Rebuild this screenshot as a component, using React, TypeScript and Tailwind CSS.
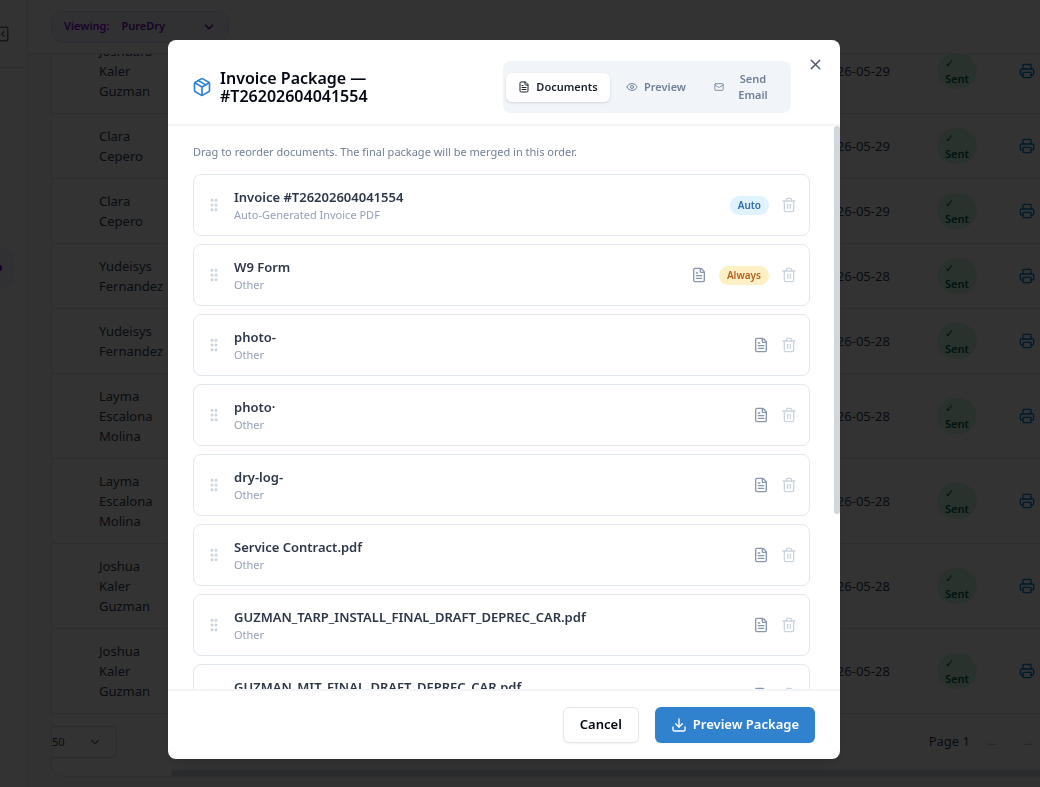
import React, { useState } from 'react';
import {
  ChevronDown,
  Download,
  Eye,
  FileText,
  GripVertical,
  Mail,
  Package,
  PanelLeftClose,
  Printer,
  Trash2,
  X,
} from 'lucide-react';

type Doc = {
  id: number;
  name: string;
  type: string;
  badge?: 'Auto' | 'Always';
  hasFile: boolean;
};

const DOCS: Doc[] = [
  { id: 1, name: 'Invoice #T26202604041554', type: 'Auto-Generated Invoice PDF', badge: 'Auto', hasFile: false },
  { id: 2, name: 'W9 Form', type: 'Other', badge: 'Always', hasFile: true },
  { id: 3, name: 'photo-', type: 'Other', hasFile: true },
  { id: 4, name: 'photo·', type: 'Other', hasFile: true },
  { id: 5, name: 'dry-log-', type: 'Other', hasFile: true },
  { id: 6, name: 'Service Contract.pdf', type: 'Other', hasFile: true },
  { id: 7, name: 'GUZMAN_TARP_INSTALL_FINAL_DRAFT_DEPREC_CAR.pdf', type: 'Other', hasFile: true },
  { id: 8, name: 'GUZMAN_MIT_FINAL_DRAFT_DEPREC_CAR.pdf', type: 'Other', hasFile: true },
];

const INVOICES = [
  { name: ['Joshuara', 'Kaler', 'Guzman'], date: '2026-05-29' },
  { name: ['Clara', 'Cepero'], date: '2026-05-29' },
  { name: ['Clara', 'Cepero'], date: '2026-05-29' },
  { name: ['Yudeisys', 'Fernandez'], date: '2026-05-28' },
  { name: ['Yudeisys', 'Fernandez'], date: '2026-05-28' },
  { name: ['Layma', 'Escalona', 'Molina'], date: '2026-05-28' },
  { name: ['Layma', 'Escalona', 'Molina'], date: '2026-05-28' },
  { name: ['Joshua', 'Kaler', 'Guzman'], date: '2026-05-28' },
  { name: ['Joshua', 'Kaler', 'Guzman'], date: '2026-05-28' },
];

const Sidebar: React.FC = () => (
  <aside className="flex w-7 shrink-0 flex-col overflow-hidden border-r border-gray-200 bg-white">
    <div className="flex h-[68px] shrink-0 items-center border-b border-gray-200">
      <button aria-label="Collapse sidebar" className="-ml-2 text-gray-500">
        <PanelLeftClose size={18} />
      </button>
    </div>
    <div className="mt-[180px] flex h-10 w-3.5 items-center rounded-r-xl bg-violet-50">
      <span className="h-1.5 w-0.5 rounded-r-full bg-violet-700" />
    </div>
  </aside>
);

const InvoiceTable: React.FC = () => (
  <table className="-mt-[25px] w-full table-fixed text-[13px] leading-5 text-slate-700">
    <colgroup>
      <col className="w-[31px]" />
      <col className="w-24" />
      <col />
      <col className="w-[115px]" />
      <col className="w-[82px]" />
      <col className="w-[37px]" />
    </colgroup>
    <tbody>
      {INVOICES.map((row, i) => (
        <tr key={i} className="border-b border-gray-200">
          <td />
          <td className="py-3 pl-4">
            {row.name.map((part) => (
              <span key={part} className="block">{part}</span>
            ))}
          </td>
          <td />
          <td className="pl-4">{row.date}</td>
          <td className="pl-4">
            <span className="flex h-9 w-10 flex-col justify-center rounded-full bg-emerald-100 px-2 text-[11px] leading-4 font-semibold text-emerald-800">
              <span className="font-normal">✓</span>
              <span>Sent</span>
            </span>
          </td>
          <td className="pl-4">
            <button aria-label="Print invoice" className="block text-sky-600">
              <Printer size={16} />
            </button>
          </td>
        </tr>
      ))}
    </tbody>
  </table>
);

const DocRow: React.FC<{ doc: Doc; onRemove: (id: number) => void }> = ({ doc, onRemove }) => (
  <li className="flex items-center gap-3 rounded-lg border border-[#e2e8f0] bg-white p-3">
    <GripVertical size={16} strokeWidth={2.5} className="shrink-0 cursor-grab text-[#cbd5e0]" />
    <div className="min-w-0 flex-1">
      <p className="truncate text-[13px] leading-5 font-semibold text-[#2d3748]">{doc.name}</p>
      <p className="text-[11px] leading-4 text-[#94a1b5]">{doc.type}</p>
    </div>
    {doc.hasFile && (
      <button aria-label={`Open ${doc.name}`} className="text-[#8896b0]">
        <FileText size={16} />
      </button>
    )}
    {doc.badge === 'Auto' && (
      <span className="rounded-full bg-[#e0f2fe] px-2 text-[10px] leading-[19px] font-semibold text-[#2b6cb0]">Auto</span>
    )}
    {doc.badge === 'Always' && (
      <span className="rounded-full bg-[#fdf0c4] px-2 text-[10px] leading-[19px] font-semibold text-[#b7601f]">Always</span>
    )}
    <button aria-label={`Remove ${doc.name}`} onClick={() => onRemove(doc.id)} className="text-[#cbd5e0]">
      <Trash2 size={16} />
    </button>
  </li>
);

const App: React.FC = () => {
  const [docs, setDocs] = useState<Doc[]>(DOCS);

  const removeDoc = (id: number) => {
    setDocs(docs.filter((d) => d.id !== id));
  };

  return (
    <div className="flex h-screen overflow-hidden bg-white font-['Noto_Sans','Open_Sans',sans-serif]">
      <Sidebar />

      <div className="flex min-w-0 flex-1 flex-col bg-gray-50">
        <header className="flex h-[54px] shrink-0 items-center border-b border-gray-200 bg-white pl-[23px]">
          <div className="relative flex h-8 w-[178px] items-center gap-3 rounded-xl border border-violet-200 bg-violet-50 pl-3 text-[11px] font-semibold text-purple-700">
            <label htmlFor="company">Viewing:</label>
            <select id="company" className="h-full flex-1 appearance-none bg-transparent text-purple-800">
              <option>PureDry</option>
            </select>
            <ChevronDown size={14} strokeWidth={3} className="pointer-events-none absolute right-3 text-purple-800" />
          </div>
        </header>

        <main className="min-h-0 flex-1 pl-[23px]">
          <section className="overflow-hidden rounded-bl-xl border-b border-l border-gray-200 bg-white">
            <InvoiceTable />
            <div className="flex items-center justify-between py-3 text-slate-700">
              <div className="relative flex h-8 w-[65px] items-center rounded-r-md border border-l-0 border-gray-300">
                <select aria-label="Rows per page" className="h-full w-full appearance-none bg-transparent text-[11px]">
                  <option>50</option>
                </select>
                <ChevronDown size={14} className="pointer-events-none absolute right-3.5 text-gray-500" />
              </div>
              <div className="flex items-center gap-4 pr-1.5 text-[13px]">
                <span>Page 1</span>
                <div className="flex gap-6 text-xs text-gray-400">
                  <button aria-label="Previous page" disabled>←</button>
                  <button aria-label="Next page" disabled>→</button>
                </div>
              </div>
            </div>
            <div className="ml-[119px] h-1.5 rounded-l-full bg-slate-300" />
          </section>
        </main>
      </div>

      <div className="fixed inset-0 flex justify-center bg-black/80 pt-10 pr-8 pb-7">
        <div
          role="dialog"
          aria-modal="true"
          aria-labelledby="package-title"
          className="relative flex h-full w-full max-w-2xl flex-col overflow-hidden rounded-lg bg-white shadow-lg"
        >
          <div className="flex shrink-0 items-center justify-between border-b-2 border-gray-100 pt-[21px] pr-[49px] pb-[11px] pl-6">
            <h2 id="package-title" className="flex items-center gap-2 text-base leading-[18px] font-semibold text-gray-950">
              <Package size={20} className="shrink-0 text-[#3182ce]" />
              <span>
                Invoice Package —
                <br />
                #T26202604041554
              </span>
            </h2>
            <div role="tablist" className="flex w-72 items-center rounded-lg bg-[#f1f5fa] px-[3px] py-[2px] text-[11px] font-semibold text-[#718096]">
              <button role="tab" aria-selected="true" className="flex h-[29px] w-[104px] shrink-0 items-center justify-center gap-1.5 rounded-md bg-white text-[#1a202c] shadow-sm">
                <FileText size={12} />
                Documents
              </button>
              <button role="tab" aria-selected="false" className="flex w-[92px] shrink-0 items-center justify-center gap-1.5">
                <Eye size={12} />
                Preview
              </button>
              <button role="tab" aria-selected="false" className="flex flex-1 items-center justify-center gap-3.5 py-2 pr-2 leading-4">
                <Mail size={10} className="shrink-0" />
                <span>
                  Send
                  <br />
                  Email
                </span>
              </button>
            </div>
            <button aria-label="Close" className="absolute top-4 right-4 text-gray-600">
              <X size={17} />
            </button>
          </div>

          <div className="flex min-h-0 flex-1">
            <div className="min-w-0 flex-1 overflow-y-auto py-4 pr-6 pl-[25px] [scrollbar-width:none]">
              <p className="text-[11px] leading-5 text-[#718096]">
                Drag to reorder documents. The final package will be merged in this order.
              </p>
              <ul className="mt-3 flex flex-col gap-2">
                {docs.map((doc) => (
                  <DocRow key={doc.id} doc={doc} onRemove={removeDoc} />
                ))}
              </ul>
            </div>
            <div className="w-1.5 shrink-0">
              <div className="h-[69%] rounded-full bg-gray-300" />
            </div>
          </div>

          <div className="flex shrink-0 justify-end gap-4 border-t-2 border-gray-100 py-4 pr-[25px] pl-6 text-[13px] font-semibold">
            <button className="h-9 rounded-md border border-gray-200 bg-white px-4 text-gray-950 shadow-xs">Cancel</button>
            <button className="flex h-9 items-center gap-1.5 rounded-md bg-[#3182ce] px-4 text-white shadow-xs">
              <Download size={16} />
              Preview Package
            </button>
          </div>
        </div>
      </div>
    </div>
  );
};

export default App;
